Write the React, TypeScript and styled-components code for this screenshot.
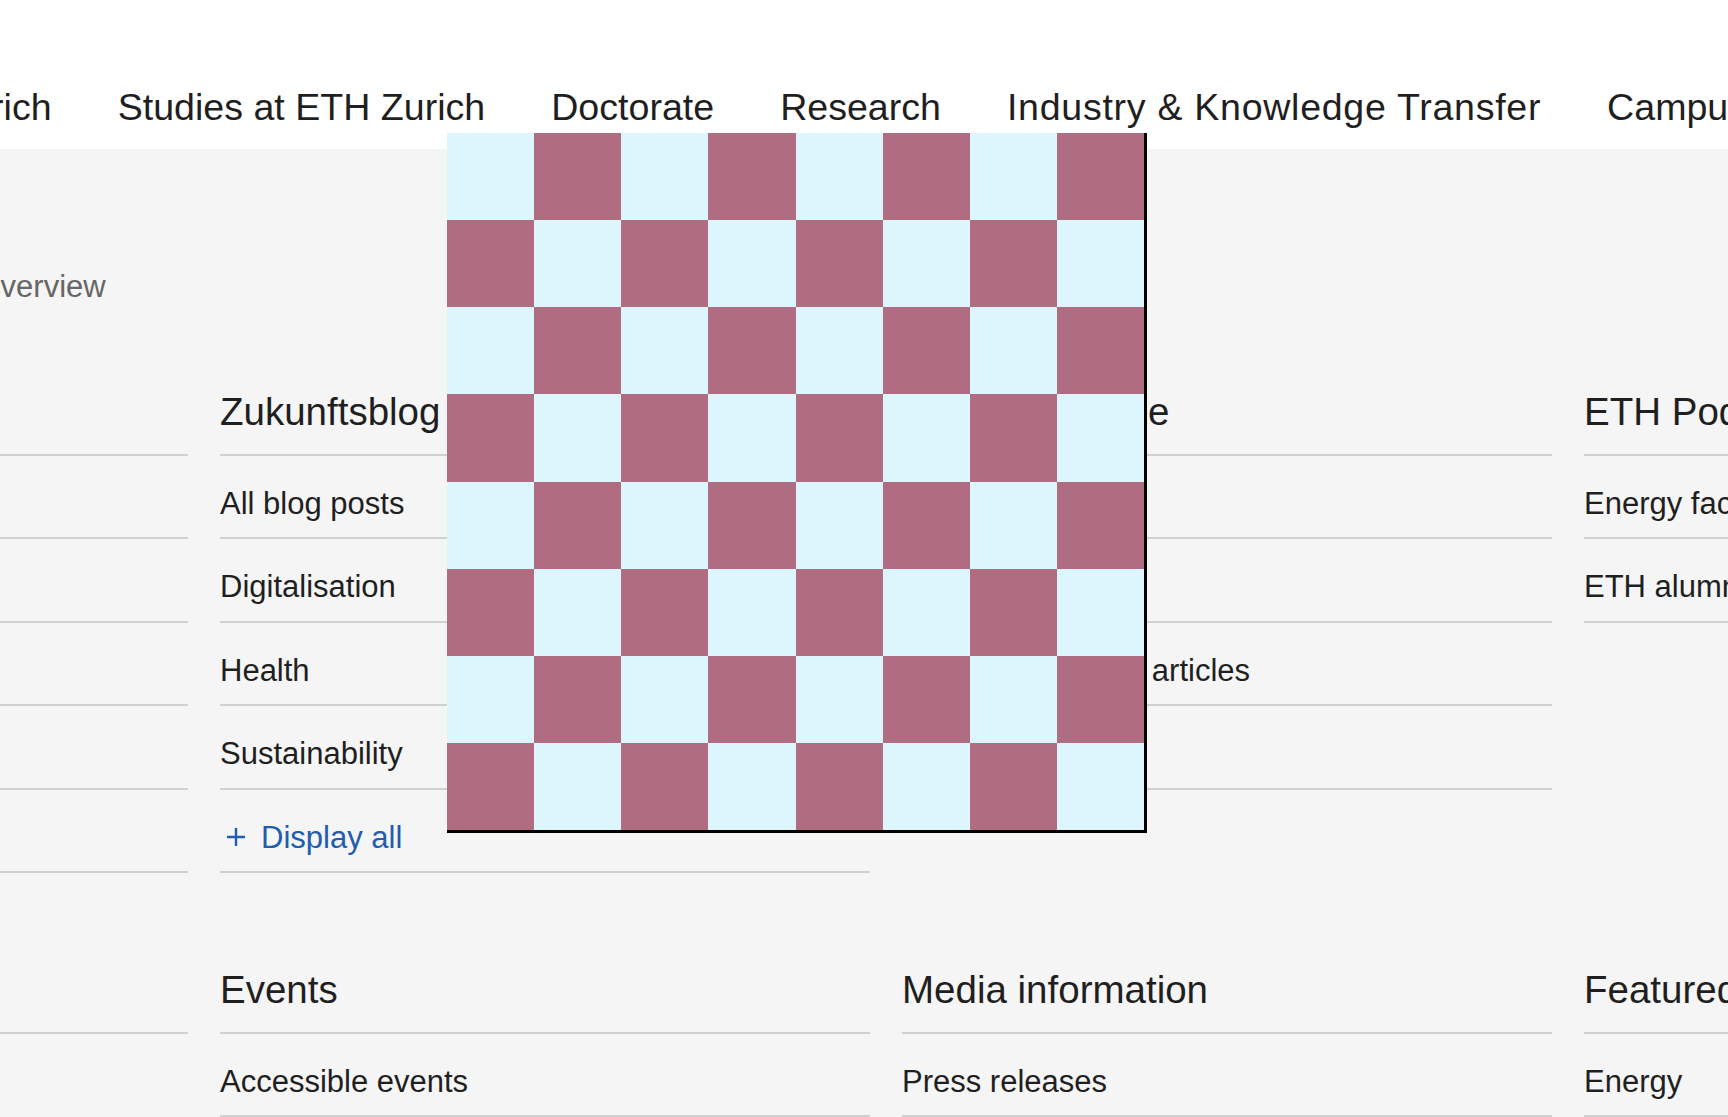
import React from "react";
import styled, { createGlobalStyle } from "styled-components";

const GlobalStyle = createGlobalStyle`
  html, body {
    margin: 0;
    padding: 0;
    background: #f5f5f5;
    overflow: hidden;
  }
  body {
    font-family: "Liberation Sans", Arial, sans-serif;
    color: #222;
  }
  * { box-sizing: border-box; }
`;

const Frame = styled.div`
  position: relative;
  width: 1728px;
  height: 1117px;
  overflow: hidden;
  background: #f5f5f5;
`;

const Header = styled.header`
  height: 149px;
  background: #ffffff;
  padding-top: 85px;
  overflow: hidden;
`;

const NavList = styled.nav`
  display: flex;
  gap: 66px;
  margin-left: -247px;
  white-space: nowrap;
`;

const NavItem = styled.a<{ $wide?: boolean }>`
  flex: none;
  font-size: 37.6px;
  line-height: 45px;
  color: #1f1f1f;
  text-decoration: none;
  letter-spacing: ${(p) => (p.$wide ? "0.7px" : "0")};
`;

const Main = styled.main`
  margin-left: -462px;
  width: 2694px;
`;

const OverviewLink = styled.a`
  display: block;
  margin: 119px 0 0 438.5px;
  font-size: 31px;
  line-height: 37px;
  color: #666;
  text-decoration: none;
`;

const SectionGrid = styled.div`
  display: grid;
  grid-template-columns: repeat(4, 650px);
  column-gap: 32px;
  row-gap: 94px;
  align-items: start;
  margin-top: 84px;
`;

const Column = styled.section`
  display: flex;
  flex-direction: column;
`;

const Heading = styled.h2`
  margin: 0;
  padding-bottom: 18.6px;
  font-size: 38.5px;
  line-height: 46px;
  font-weight: 400;
  color: #1f1f1f;
  white-space: nowrap;
  border-bottom: 2px solid #d0d0d0;
`;

const ItemList = styled.ul`
  list-style: none;
  margin: 0;
  padding: 0;
`;

const Item = styled.li<{ $accent?: boolean }>`
  display: flex;
  align-items: center;
  gap: 15px;
  padding: 29px 0 15.5px 0;
  font-size: 31px;
  line-height: 37px;
  color: ${(p) => (p.$accent ? "#215caf" : "#1f1f1f")};
  white-space: nowrap;
  border-bottom: 2px solid #d0d0d0;
`;

const PlusIcon = styled.svg`
  flex: none;
  width: 20px;
  height: 20px;
  margin-left: 6px;
`;

const Board = styled.div`
  position: absolute;
  left: 447px;
  top: 133px;
  width: 700px;
  height: 700px;
  display: grid;
  grid-template-columns: repeat(8, 1fr);
  grid-template-rows: repeat(8, 1fr);
  border-right: 3px solid #000;
  border-bottom: 3px solid #000;
`;

const Cell = styled.div<{ $dark: boolean }>`
  background: ${(p) => (p.$dark ? "#b06c80" : "#ddf6fd")};
`;

type Col = { title: string; items: { label: React.ReactNode; accent?: boolean }[] };

const row1: Col[] = [
  {
    title: "ETH News",
    items: [
      { label: "All news" },
      { label: "Campus" },
      { label: "Research" },
      { label: "People" },
      { label: "Transfer" },
    ],
  },
  {
    title: "Zukunftsblog",
    items: [
      { label: "All blog posts" },
      { label: "Digitalisation" },
      { label: "Health" },
      { label: "Sustainability" },
      { label: "Display all", accent: true },
    ],
  },
  {
    title: "Horizon Europe",
    items: [
      { label: "Overview" },
      { label: "Dossier" },
      { label: "Horizon Europe – articles" },
      { label: "Contact" },
    ],
  },
  {
    title: "ETH Podcast",
    items: [{ label: "Energy facts" }, { label: "ETH alumni podcast" }],
  },
];

const row2: Col[] = [
  {
    title: "Contact",
    items: [
      {
        label: (
          <span>
            Social
            <br />
            media
          </span>
        ),
      },
    ],
  },
  { title: "Events", items: [{ label: "Accessible events" }] },
  { title: "Media information", items: [{ label: "Press releases" }] },
  { title: "Featured topics", items: [{ label: "Energy" }] },
];

const Plus = () => (
  <PlusIcon viewBox="0 0 20 20" fill="none" stroke="#215caf" strokeWidth="2.4">
    <path d="M10 1v18M1 10h18" />
  </PlusIcon>
);

const renderCol = (c: Col) => (
  <Column key={c.title}>
    <Heading>{c.title}</Heading>
    <ItemList>
      {c.items.map((it, i) => (
        <Item key={i} $accent={it.accent}>
          {it.accent && <Plus />}
          {it.label}
        </Item>
      ))}
    </ItemList>
  </Column>
);

export default function App() {
  const cells = [];
  for (let r = 0; r < 8; r++) {
    for (let c = 0; c < 8; c++) {
      cells.push(<Cell key={`${r}-${c}`} $dark={(r + c) % 2 === 1} />);
    }
  }
  return (
    <Frame>
      <GlobalStyle />
      <Header>
        <NavList>
          <NavItem href="#">About ETH Zurich</NavItem>
          <NavItem href="#">Studies at ETH Zurich</NavItem>
          <NavItem href="#">Doctorate</NavItem>
          <NavItem href="#">Research</NavItem>
          <NavItem href="#" $wide>
            Industry &amp; Knowledge Transfer
          </NavItem>
          <NavItem href="#">Campus</NavItem>
          <NavItem href="#">News &amp; Events</NavItem>
        </NavList>
      </Header>
      <Main>
        <OverviewLink href="#">Overview</OverviewLink>
        <SectionGrid>
          {row1.map(renderCol)}
          {row2.map(renderCol)}
        </SectionGrid>
      </Main>
      <Board>{cells}</Board>
    </Frame>
  );
}
